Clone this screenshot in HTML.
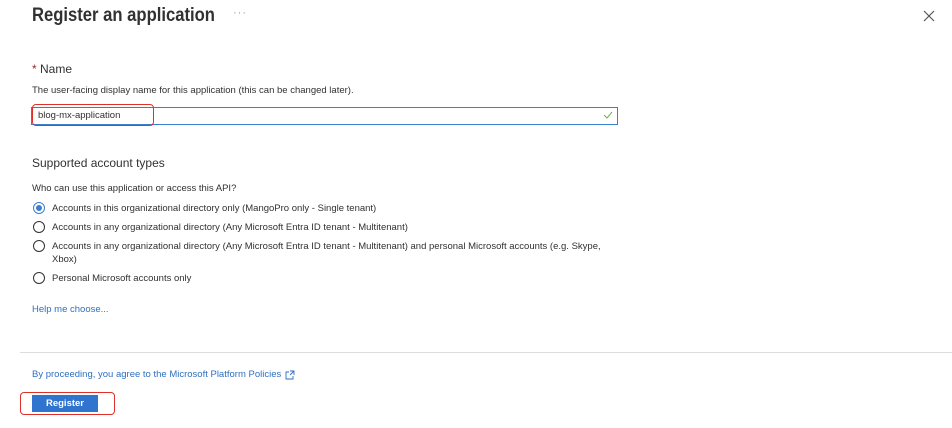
<!DOCTYPE html>
<html><head><style>
body{margin:0;width:952px;height:428px;background:#fff;font-family:"Liberation Sans",sans-serif;color:#323130;position:relative;overflow:hidden}
.a{position:absolute;white-space:nowrap}
.s{font-size:9.5px}
.r{position:absolute;left:33px;width:12px;height:12px;border:1px solid #323130;border-radius:50%;box-sizing:border-box}
</style></head><body>
<div class="a" style="left:32px;top:5px;font-size:19px;font-weight:600;color:#323130;transform:scaleX(0.875);transform-origin:left">Register an application</div>
<div class="a" style="left:233px;top:7px;font-size:11px;color:#999;letter-spacing:1px">···</div>
<svg class="a" style="left:923px;top:10px" width="12" height="12"><path d="M1 1L11 11M11 1L1 11" stroke="#555" stroke-width="1.2"/></svg>
<div class="a" style="left:32px;top:62px;font-size:12px"><span style="color:#a4262c">*</span> Name</div>
<div class="a s" style="left:32px;top:85px">The user-facing display name for this application (this can be changed later).</div>
<div class="a" style="left:31px;top:107px;width:587px;height:18px;border:1.5px solid #3c7fd1;box-sizing:border-box"></div>
<div class="a s" style="left:38px;top:110px">blog-mx-application</div>
<svg class="a" style="left:603px;top:111px" width="10" height="8"><path d="M1 4L4 7L9 1" stroke="#6bb24a" fill="none" stroke-width="1"/></svg>
<div class="a" style="left:32px;top:104px;width:122px;height:22px;border:1.5px solid #e0302a;border-radius:4px;box-sizing:border-box"></div>
<div class="a" style="left:32px;top:156px;font-size:12px">Supported account types</div>
<div class="a s" style="left:32px;top:183px">Who can use this application or access this API?</div>
<div class="r" style="top:202px;border-color:#3c7fd1"><div style="margin:2px;width:6px;height:6px;border-radius:50%;background:#3c7fd1"></div></div>
<div class="a s" style="left:52px;top:203px">Accounts in this organizational directory only (MangoPro only - Single tenant)</div>
<div class="r" style="top:221px"></div>
<div class="a s" style="left:52px;top:222px">Accounts in any organizational directory (Any Microsoft Entra ID tenant - Multitenant)</div>
<div class="r" style="top:240px"></div>
<div class="a s" style="left:52px;top:241px">Accounts in any organizational directory (Any Microsoft Entra ID tenant - Multitenant) and personal Microsoft accounts (e.g. Skype,</div>
<div class="a s" style="left:52px;top:254px">Xbox)</div>
<div class="r" style="top:272px"></div>
<div class="a s" style="left:52px;top:273px">Personal Microsoft accounts only</div>
<div class="a s" style="left:32px;top:304px;color:#2f6fc0">Help me choose...</div>
<div class="a" style="left:20px;top:352px;width:932px;height:1px;background:#ddd"></div>
<div class="a s" style="left:32px;top:369px;color:#2f6fc0">By proceeding, you agree to the Microsoft Platform Policies</div>
<svg class="a" style="left:285px;top:370px" width="10" height="10"><path d="M4 2H1V9H8V6M5 1H9V5M9 1L5 5" stroke="#2f6fc0" fill="none" stroke-width="0.9"/></svg>
<div class="a" style="left:32px;top:395px;width:66px;height:17px;background:#2f74cf;color:#fff;font-size:9.5px;text-align:center;line-height:17px;font-weight:600">Register</div>
<div class="a" style="left:20px;top:392px;width:95px;height:23px;border:1.5px solid #e0302a;border-radius:4px;box-sizing:border-box"></div>
</body></html>
